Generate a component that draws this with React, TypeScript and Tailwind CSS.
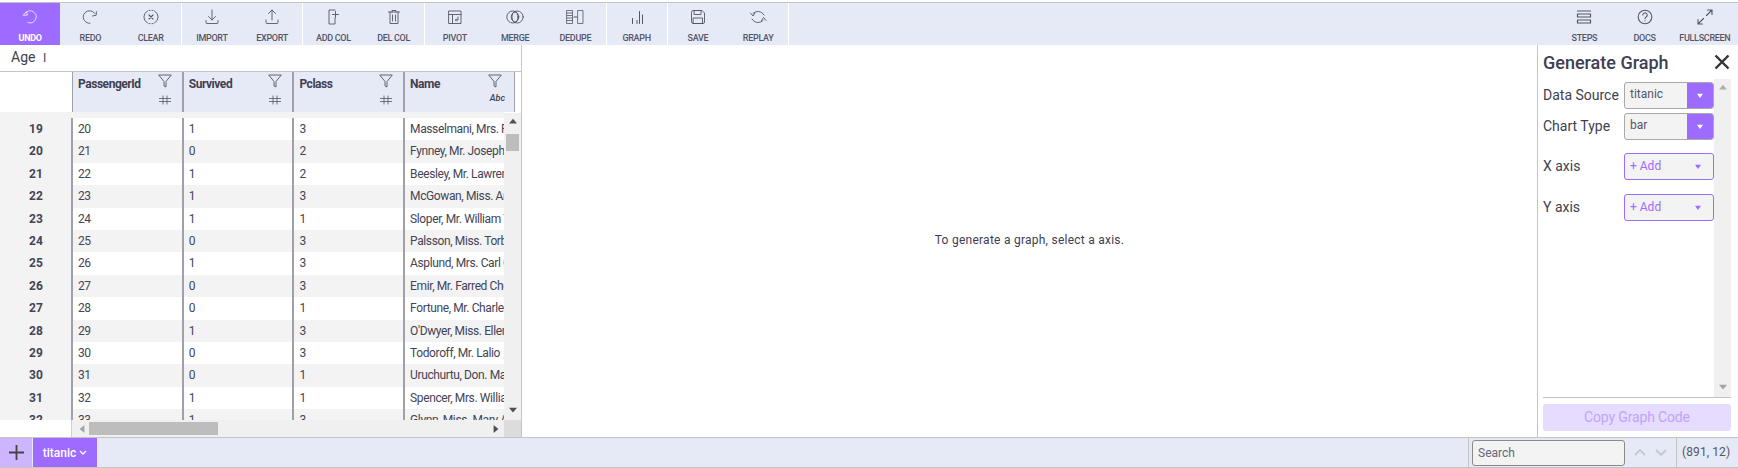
import React from "react";

const S = (p: { children: React.ReactNode; w?: number; h?: number; sw?: number }) => (
  <svg width={p.w ?? 20} height={p.h ?? 20} viewBox="0 0 20 20" fill="none" stroke="currentColor" strokeWidth={p.sw ?? 0.9} strokeLinecap="round" strokeLinejoin="round">
    {p.children}
  </svg>
);

const icons: Record<string, React.ReactNode> = {
  undo: <S><path d="M6 5.500A6 6 0 1 1 8 15.500" /><path d="M3.500 8 6.500 4.500l0.800 3.200z" /></S>,
  redo: <S><path d="M14.800 6.500A6.300 6.300 0 1 0 10 16.300" /><path d="M12.500 9l3.700-.8.200-3.500" /></S>,
  clear: <S><path d="M6.500 4A6.800 6.800 0 0 0 6.500 16M13.500 4A6.800 6.800 0 0 1 13.500 16M8 3.400h1M11 3.400h1M8 16.600h1M11 16.600h1" /><path d="M8 8l4 4M12 8l-4 4" strokeWidth="1.100" /></S>,
  import: <S><path d="M10 3v10M6.500 9.500 10 13l3.500-3.500" /><path d="M4 13.500v2a1 1 0 0 0 1 1h10a1 1 0 0 0 1-1v-2" /></S>,
  export: <S><path d="M10 13V3M6.500 6.500 10 3l3.500 3.500" /><path d="M4 13v2.500a1 1 0 0 0 1 1h10a1 1 0 0 0 1-1V13" /></S>,
  addcol: <S><path d="M12 3H6v14h6V11" /><path d="M12.500 4.500v6M9.500 7.500h6" /></S>,
  delcol: <S><path d="M4.500 5h11M8 5V3.500h4V5M6 5v11.500h8V5M8.500 8v6M11.500 8v6" /></S>,
  pivot: <S><rect x="4" y="4" width="12" height="12.500" /><path d="M4 7.500h12M7.500 7.500v9" /><path d="M13 10v3h-2.500M11.500 12l-1 1 1 1" /></S>,
  merge: <S><circle cx="7.800" cy="10" r="6" /><circle cx="12.200" cy="10" r="6" /><ellipse cx="10" cy="10" rx="3" ry="5" /></S>,
  dedupe: <S sw={0.8}><rect x="2" y="3.500" width="5.500" height="13" /><path d="M2 6h5.500M2 8.500h5.500M2 11h5.500M2 13.500h5.500" /><rect x="13" y="3.500" width="5" height="13" /><path d="M9 10h3" strokeWidth="1.200" /></S>,
  graph: <S><path d="M5.500 11.500v5M10 13.500v3M12.500 4.500v12M15.500 8v8.500" strokeWidth="1" /></S>,
  save: <S><path d="M3.500 5a1.500 1.500 0 0 1 1.500-1.500h9l2.500 2.500v9a1.500 1.500 0 0 1-1.500 1.500H5A1.500 1.500 0 0 1 3.500 15z" /><rect x="6.500" y="3.500" width="6.500" height="4" /><rect x="5.500" y="11" width="9" height="5.500" /></S>,
  replay: <S><path d="M16 8A6.800 6.800 0 0 0 5 6.500" /><path d="M2.500 6l2.500 3 2-3" /><path d="M4 12A6.800 6.800 0 0 0 15 13.500" /><path d="M18 13.500l-2.500-3-2 3" /></S>,
  steps: <S sw={1.200}><path d="M3.500 4h13M3.500 7h13v3h-13zM3.500 13h13v3h-13z" /></S>,
  docs: <S sw={1.100}><circle cx="10" cy="10" r="6.800" /><path d="M7.800 8a2.200 2.200 0 1 1 3.400 1.900c-.8.500-1.200 1-1.200 1.800" /><path d="M10 13.800v.2" /></S>,
  full: <S sw={1.100}><path d="M11.500 8.500 17 3M12.500 3H17v4.500" /><path d="M8.500 11.500 3 17M7.500 17H3v-4.500" /></S>,
};

const groups: [string, string, boolean?][][] = [
  [["undo", "UNDO", true], ["redo", "REDO"], ["clear", "CLEAR"]],
  [["import", "IMPORT"], ["export", "EXPORT"]],
  [["addcol", "ADD COL"], ["delcol", "DEL COL"]],
  [["pivot", "PIVOT"], ["merge", "MERGE"], ["dedupe", "DEDUPE"]],
  [["graph", "GRAPH"]],
  [["save", "SAVE"], ["replay", "REPLAY"]],
];

const rows: [number, number, number, number, string][] = [
  [19, 20, 1, 3, "Masselmani, Mrs. Fatima"],
  [20, 21, 0, 2, "Fynney, Mr. Joseph J"],
  [21, 22, 1, 2, "Beesley, Mr. Lawrence"],
  [22, 23, 1, 3, "McGowan, Miss. Anna"],
  [23, 24, 1, 1, "Sloper, Mr. William Thompson"],
  [24, 25, 0, 3, "Palsson, Miss. Torborg Danira"],
  [25, 26, 1, 3, "Asplund, Mrs. Carl Oscar"],
  [26, 27, 0, 3, "Emir, Mr. Farred Chehab"],
  [27, 28, 0, 1, "Fortune, Mr. Charles Alexander"],
  [28, 29, 1, 3, "O'Dwyer, Miss. Ellen"],
  [29, 30, 0, 3, "Todoroff, Mr. Lalio"],
  [30, 31, 0, 1, "Uruchurtu, Don. Manuel E"],
  [31, 32, 1, 1, "Spencer, Mrs. William Augustus"],
  [32, 33, 1, 3, "Glynn, Miss. Mary Agatha"],
];

function ToolBtn({ icon, label, active }: { icon: string; label: string; active?: boolean }) {
  return (
    <div className={`w-[60.250px] h-full flex flex-col items-center pt-[3px] ${active ? "bg-[#9d6bff] text-[#eee6ff]" : "text-[#555566]"}`}>
      <div className="h-[21px] flex items-center justify-center">{icons[icon]}</div>
      <div className={`mt-[6px] text-[9px] leading-[11px] tracking-[-0.3px] ${active ? "font-bold text-white" : "font-medium"}`}>{label}</div>
    </div>
  );
}

const Filter = () => (
  <svg width="14" height="14" viewBox="0 0 14 14" fill="none" stroke="#555566" strokeWidth="0.900" strokeLinejoin="round">
    <path d="M0.700 1h12.600L8 7.500v5.500L6 12V7.500z" />
  </svg>
);

const Hash = () => (
  <svg width="14" height="10" viewBox="0 0 14 10" fill="none" stroke="#555566" strokeWidth="0.800">
    <path d="M1 3.500h12M1 6.500h12M5 0.500v9M9 0.500v9" />
  </svg>
);

function Head({ name, w }: { name: string; w: string }) {
  return (
    <div className={`${w} shrink-0 h-full border-r-[2px] border-[#a0a0aa] flex justify-between pl-[5px] pr-[10px] pt-[1px] bg-[#e6eaf7]`}>
      <div className="text-[12px] font-bold text-[#404050] leading-[16px] mt-[3px] tracking-[-0.45px]">{name}</div>
      <div className="flex flex-col items-end pt-[1px]">
        <Filter />
        <div className="mt-[7px]"><Hash /></div>
      </div>
    </div>
  );
}

function NameHead() {
  return (
    <div className="w-[110px] shrink-0 h-full border-r-[1px] border-[#a0a0aa] flex justify-between pl-[5px] pr-[9px] pt-[1px] bg-[#e6eaf7]">
      <div className="text-[12px] font-bold text-[#404050] leading-[16px] mt-[3px] tracking-[-0.45px]">Name</div>
      <div className="flex flex-col items-end pt-[1px]">
        <div className="mr-[3px]"><Filter /></div>
        <div className="mt-[4px] text-[9px] leading-[12px] italic font-medium text-[#404050]">Abc</div>
      </div>
    </div>
  );
}

function Cell({ v, w }: { v: React.ReactNode; w: string }) {
  return (
    <div className={`${w} shrink-0 h-full border-r-[2px] border-[#a0a0aa] pl-[5px] overflow-hidden whitespace-nowrap text-[12px] leading-[22px] text-[#444455] tracking-[-0.38px]`}>
      {v}
    </div>
  );
}

function Caret({ dir, color }: { dir: "up" | "down" | "left" | "right"; color: string }) {
  const p = { up: "M0 7 5 1l5 6z", down: "M0 1l5 6 5-6z", left: "M8 0 2 5l6 5z", right: "M2 0l6 5-6 5z" }[dir];
  return (
    <svg width="8" height="8" viewBox="0 0 10 10" fill={color}>
      <path d={p} />
    </svg>
  );
}

function Field({ label, value, mt }: { label: string; value: string; mt: string }) {
  return (
    <div className={`flex items-center ${mt}`}>
      <div className="w-[81px] text-[14px] text-[#404050] leading-[26px] pb-[1px]">{label}</div>
      <div className="w-[90px] h-[27px] flex rounded-[3px] border border-[#a9a9a9] bg-[#f3f3f3] overflow-hidden">
        <div className="flex-1 pl-[5px] text-[12px] leading-[23px] text-[#555566]">{value}</div>
        <div className="w-[26px] -my-[1px] bg-[#9d6bff] flex items-center justify-center">
          <svg width="6" height="5" viewBox="0 0 10 8" fill="#fff"><path d="M0 1h10L5 8z" /></svg>
        </div>
      </div>
    </div>
  );
}

function Axis({ label, mt }: { label: string; mt: string }) {
  return (
    <div className={`flex items-center ${mt}`}>
      <div className="w-[81px] text-[14px] text-[#404050] leading-[26px] pb-[1px]">{label}</div>
      <div className="w-[90px] h-[27px] flex items-center justify-between rounded-[3px] border border-[#9d6bff] bg-[#f3f3f3] pl-[5px] pr-[12px]">
        <span className="text-[12px] leading-[23px] text-[#9d6bff]">+ Add</span>
        <svg width="6" height="5" viewBox="0 0 10 8" fill="#9d6bff"><path d="M0 1h10L5 8z" /></svg>
      </div>
    </div>
  );
}

const COL = "w-[110.700px]";
const NAME = "w-[100px]";

export default function App() {
  return (
    <div className="w-[1738px] h-[468px] bg-white flex flex-col overflow-hidden" style={{ fontFamily: 'Roboto, "Noto Sans", sans-serif' }}>
      <div className="h-[3px] shrink-0 bg-white border-b border-[#c4c4c4]" />
      {/* toolbar */}
      <div className="h-[42px] shrink-0 bg-[#e6eaf7] flex justify-between">
        <div className="flex h-full">
          {groups.map((g, i) => (
            <div key={i} className="flex h-full border-r border-white">
              {g.map(([ic, l, a]) => <ToolBtn key={l} icon={ic} label={l} active={a} />)}
            </div>
          ))}
        </div>
        <div className="flex h-full pr-[3px]">
          <ToolBtn icon="steps" label="STEPS" />
          <ToolBtn icon="docs" label="DOCS" />
          <ToolBtn icon="full" label="FULLSCREEN" />
        </div>
      </div>
      {/* main */}
      <div className="flex-1 min-h-0 flex">
        {/* left */}
        <div className="w-[522px] shrink-0 border-r border-[#c4c4c4] flex flex-col">
          <div className="h-[27px] shrink-0 border-b border-[#c4c4c4] pl-[11px] text-[14px] leading-[24px] text-[#404050]">
            Age <span className="ml-[4px] text-[12px]">I</span>
          </div>
          <div className="h-[40px] shrink-0 flex">
            <div className="w-[73px] shrink-0 border-r-[1px] border-[#a0a0aa]" />
            <Head name="PassengerId" w={COL} />
            <Head name="Survived" w={COL} />
            <Head name="Pclass" w={COL} />
            <NameHead />
          </div>
          <div className="flex-1 min-h-0 flex flex-col">
            <div className="flex-1 min-h-0 flex">
              <div className="flex-1 min-w-0 overflow-hidden pt-[6px] bg-[#f3f3f3]">
                {rows.map((r, i) => (
                  <div key={r[0]} className={`h-[22.400px] flex ${i % 2 ? "bg-[#f3f3f3]" : "bg-white"}`}>
                    <div className="w-[73px] shrink-0 h-full bg-[#f3f3f3] border-r-[2px] border-[#a0a0aa] text-center pl-[1px] text-[12px] font-bold leading-[22px] text-[#444455]">{r[0]}</div>
                    <Cell v={r[1]} w={COL} />
                    <Cell v={r[2]} w={COL} />
                    <Cell v={r[3]} w={COL} />
                    <div className={`${NAME} shrink-0 h-full pl-[5px] overflow-hidden whitespace-nowrap text-[12px] leading-[22px] text-[#444455] tracking-[-0.38px]`}>{r[4]}</div>
                  </div>
                ))}
              </div>
              <div className="w-[17px] shrink-0 bg-[#f0f0f0] flex flex-col items-center pt-[5px] mt-[1px]">
                <Caret dir="up" color="#505050" />
                <div className="w-[13px] h-[17px] bg-[#bdbdbd] mt-[8px]" />
                <div className="flex-1" />
                <div className="pb-[5px]"><Caret dir="down" color="#505050" /></div>
              </div>
            </div>
            <div className="h-[17px] shrink-0 flex ml-[71px] bg-[#f0f0f0] border-l-[1px] border-[#d0d0d0]">
              <div className="flex-1 flex items-center pl-[6px] pr-[4px]">
                <Caret dir="left" color="#a3a3a3" />
                <div className="w-[129px] h-[13px] bg-[#bdbdbd] ml-[3px]" />
                <div className="flex-1" />
                <Caret dir="right" color="#505050" />
              </div>
              <div className="w-[17px] bg-[#dcdcdc]" />
            </div>
          </div>
        </div>
        {/* center */}
        <div className="flex-1 min-w-0 flex items-center justify-center text-[12px] text-[#404050] tracking-[0.25px] pb-[2px]">
          To generate a graph, select a axis.
        </div>
        {/* right */}
        <div className="w-[201px] shrink-0 border-l border-[#c4c4c4] flex flex-col pl-[5px] pr-[7px] pb-[6px]">
          <div className="h-[34px] shrink-0 flex items-center justify-between">
            <div className="text-[18px] font-medium text-[#404050]">Generate Graph</div>
            <svg width="16" height="16" viewBox="0 0 16 16" stroke="#333" strokeWidth="2.400" className="mr-[1px]"><path d="M1.500 1.500l13 13M14.500 1.500l-13 13" /></svg>
          </div>
          <div className="flex-1 min-h-0 flex border-b border-[#c4c4c4]">
            <div className="flex-1 min-w-0">
              <Field label="Data Source" value="titanic" mt="mt-[3px]" />
              <Field label="Chart Type" value="bar" mt="mt-[4px]" />
              <Axis label="X axis" mt="mt-[13px]" />
              <Axis label="Y axis" mt="mt-[14px]" />
            </div>
            <div className="w-[17px] shrink-0 bg-[#f0f0f0] flex flex-col items-center justify-between py-[5px]">
              <Caret dir="up" color="#b0b0b0" />
              <Caret dir="down" color="#a3a3a3" />
            </div>
          </div>
          <div className="h-[27px] shrink-0 mt-[6px] rounded-[3px] bg-[#e6dcff] text-[#c0a3fb] text-[14px] leading-[27px] text-center tracking-[-0.15px]">Copy Graph Code</div>
        </div>
      </div>
      {/* bottom */}
      <div className="h-[31px] shrink-0 border-t border-b border-[#c4c4c4] bg-[#e6eaf7] flex items-stretch">
        <div className="w-[32px] shrink-0 bg-[#cdb6ff] flex items-center justify-center">
          <svg width="15" height="15" viewBox="0 0 15 15" stroke="#444" strokeWidth="1.800"><path d="M7.500 0v15M0 7.500h15" /></svg>
        </div>
        <div className="w-[64px] shrink-0 bg-[#9d6bff] text-white text-[12px] font-medium flex items-center justify-center gap-[3px] ml-[1px]">
          titanic
          <svg width="8" height="6" viewBox="0 0 8 6" fill="none" stroke="#fff" strokeWidth="1.300"><path d="M1 1l3 3 3-3" /></svg>
        </div>
        <div className="flex-1" />
        <div className="flex items-center border-l border-[#c4c4c4] pl-[3px] w-[208px]">
          <div className="w-[153px] h-[26px] rounded-[3px] border border-[#8a8a8a] bg-[#f3f3f3] pl-[5px] text-[12px] leading-[24px] text-[#666677]">Search</div>
          <div className="flex items-center gap-[9px] ml-[9px]">
            <svg width="12" height="7" viewBox="0 0 12 7" fill="none" stroke="#c5c7d0" strokeWidth="1.800"><path d="M1 6l5-5 5 5" /></svg>
            <svg width="12" height="7" viewBox="0 0 12 7" fill="none" stroke="#c5c7d0" strokeWidth="1.800"><path d="M1 1l5 5 5-5" /></svg>
          </div>
        </div>
        <div className="w-[62px] shrink-0 border-l border-[#c4c4c4] pl-[5px] text-[12px] leading-[28px] text-[#555566] whitespace-nowrap tracking-[0.1px]">(891, 12)</div>
      </div>
    </div>
  );
}
